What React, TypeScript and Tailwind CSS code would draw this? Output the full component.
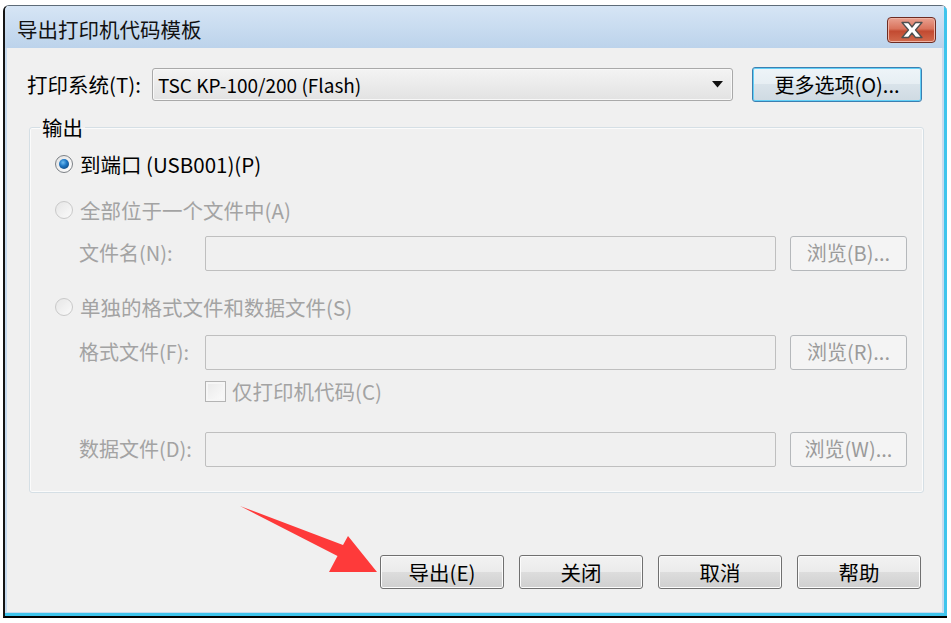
const FONT = "font-['Noto_Sans_CJK_SC','Noto_Sans',sans-serif]";

function CloseGlyph() {
  return (
    <svg width="26" height="18" viewBox="0 0 26 18">
      <path
        d="M3 1.5 H9.5 L13 6 L16.5 1.5 H23 L16.5 9 L23 16.5 H16.5 L13 12 L9.5 16.5 H3 L9.5 9 Z"
        fill="#ffffff"
        stroke="#505050"
        strokeWidth="1.3"
        strokeLinejoin="round"
      />
    </svg>
  );
}

function Radio({ checked, disabled }: { checked?: boolean; disabled?: boolean }) {
  return (
    <div
      className={
        "w-[18px] h-[18px] rounded-full flex items-center justify-center border " +
        (disabled
          ? "border-[#c9c9c9] bg-[linear-gradient(135deg,#e6e6e6,#fafafa)]"
          : "border-[#7d8186] bg-[linear-gradient(135deg,#e2e2e2,#ffffff)]")
      }
    >
      {checked && (
        <div className="w-[10px] h-[10px] rounded-full bg-[radial-gradient(circle_at_40%_35%,#6fbdf0_0%,#1f78c6_40%,#0b3563_100%)]" />
      )}
    </div>
  );
}

function WinButton({ label, w = "w-[124px]" }: { label: string; w?: string }) {
  return (
    <div
      className={
        w +
        " h-[34px] rounded-[3px] border border-[#707070] shadow-[inset_0_0_0_1px_#fcfcfc] bg-[linear-gradient(#f2f2f2_0%,#ebebeb_50%,#dddddd_50%,#cfcfcf_100%)] flex items-center justify-center text-[20.5px] leading-none text-black"
      }
    >
      {label}
    </div>
  );
}

function BrowseButton({ label }: { label: string }) {
  return (
    <div className="w-[117px] h-[35px] rounded-[3px] border border-[#b5b8bb] bg-[#f4f4f4] flex items-center justify-center text-[20px] leading-none text-[#9b9b9b]">
      {label}
    </div>
  );
}

function FileRow({ label, btn }: { label: string; btn: string }) {
  return (
    <div className="flex items-center pl-[49px] h-[36px]">
      <div className="w-[126px] text-[20px] leading-none text-[#a3a3a3] whitespace-nowrap">{label}</div>
      <div className="w-[571px] h-[35px] rounded-[2px] border border-[#bfbfbf] bg-[#f0f0f0]" />
      <div className="ml-[14px]">
        <BrowseButton label={btn} />
      </div>
    </div>
  );
}

export default function App() {
  return (
    <div className={"relative w-[951px] h-[623px] bg-white pt-[5px] pl-[3px] " + FONT}>
      <div className="w-[944px] h-[613px] flex flex-col border-l-2 border-l-[#141414] border-b-2 border-b-black border-t border-t-[#5d6b78] rounded-tl-[6px] rounded-tr-[6px] overflow-hidden">
        <div className="flex-1 flex flex-col border-r-[3px] border-r-[#3fc4ec] border-b-[3px] border-b-[#3fc4ec] bg-[#c8dbef]">
          {/* title bar */}
          <div className="h-[42px] shrink-0 flex items-start bg-[linear-gradient(#d6e5f5,#bcd3eb)]">
            <div className="pl-[12px] pt-[10px] text-[20.5px] leading-[26px] text-[#111] whitespace-nowrap">
              导出打印机代码模板
            </div>
            <div className="ml-auto mr-[8px] mt-[11px] w-[49px] h-[26px] rounded-[4px] border border-[#6e2c22] bg-[linear-gradient(#e9a190_0%,#d9735c_45%,#c24a31_55%,#d26a4d_100%)] shadow-[inset_0_0_0_1px_#f0b4a5] flex items-center justify-center">
              <CloseGlyph />
            </div>
          </div>

          {/* client area */}
          <div className="flex-1 mx-[2px] mb-[1px] bg-[#f0f0f0] flex flex-col">
            {/* printer system row */}
            <div className="mt-[19px] flex items-center h-[35px] pl-[20px]">
              <div className="w-[125px] text-[20.5px] leading-none text-black whitespace-nowrap">打印系统(T):</div>
              <div className="w-[581px] h-[33px] rounded-[3px] border border-[#a9a9a9] shadow-[inset_0_0_0_1px_#f8f8f8] bg-[linear-gradient(#f3f3f3_0%,#ebebeb_50%,#e2e2e2_100%)] flex items-center pl-[5px] pr-[9px]">
                <span className="text-[19px] leading-none text-black">TSC KP-100/200 (Flash)</span>
                <svg className="ml-auto" width="11" height="7" viewBox="0 0 11 7">
                  <path d="M0 0 H11 L5.5 6.5 Z" fill="#111" />
                </svg>
              </div>
              <div className="ml-[19px] w-[170px] h-[35px] rounded-[3px] border border-[#3c7fb1] shadow-[inset_0_0_0_1px_#62d0f7] bg-[linear-gradient(#eef4f8_0%,#e6eef3_50%,#d9e3ea_50%,#cfdae2_100%)] flex items-center justify-center text-[20px] leading-none text-black">
                更多选项(O)...
              </div>
            </div>

            {/* output group */}
            <fieldset className="mt-[12px] ml-[22px] w-[895px] border border-[#d5dfe5] rounded-[3px] shadow-[inset_0_0_0_1px_#fbfbfb] p-0 pb-[25px] min-w-0">
              <legend className="ml-[10px] px-[2px] text-[20.5px] leading-[26px] text-black">输出</legend>

              <div className="mt-[6px] h-[36px] flex items-center pl-[25px] gap-[7px]">
                <Radio checked />
                <span className="text-[20.5px] leading-none text-black whitespace-nowrap">到端口 (USB001)(P)</span>
              </div>

              <div className="mt-[10px] h-[36px] flex items-center pl-[25px] gap-[7px]">
                <Radio disabled />
                <span className="text-[20.5px] leading-none text-[#a3a3a3] whitespace-nowrap">全部位于一个文件中(A)</span>
              </div>

              <div className="mt-[7px]">
                <FileRow label="文件名(N):" btn="浏览(B)..." />
              </div>

              <div className="mt-[18px] h-[36px] flex items-center pl-[25px] gap-[7px]">
                <Radio disabled />
                <span className="text-[20.5px] leading-none text-[#a3a3a3] whitespace-nowrap">单独的格式文件和数据文件(S)</span>
              </div>

              <div className="mt-[9px]">
                <FileRow label="格式文件(F):" btn="浏览(R)..." />
              </div>

              <div className="mt-[10px] h-[22px] flex items-center pl-[175px] gap-[6px]">
                <div className="w-[21px] h-[21px] border border-[#b4b4b4] bg-[linear-gradient(135deg,#e9e9e9,#fbfbfb)] shadow-[inset_0_0_0_2px_#f6f6f6]" />
                <span className="text-[20.5px] leading-none text-[#a3a3a3] whitespace-nowrap">仅打印机代码(C)</span>
              </div>

              <div className="mt-[29px]">
                <FileRow label="数据文件(D):" btn="浏览(W)..." />
              </div>
            </fieldset>

            {/* bottom buttons */}
            <div className="mt-[62px] ml-[373px] flex gap-[15px]">
              <WinButton label="导出(E)" />
              <WinButton label="关闭" />
              <WinButton label="取消" />
              <WinButton label="帮助" />
            </div>
          </div>
        </div>
      </div>

      {/* annotation arrow */}
      <svg className="absolute left-0 top-0 pointer-events-none" width="951" height="623" viewBox="0 0 951 623">
        <polygon
          points="240,506 343,545 348,536 377,572 329,572 337.5,556"
          fill="#fe3a3a"
        />
      </svg>
    </div>
  );
}
